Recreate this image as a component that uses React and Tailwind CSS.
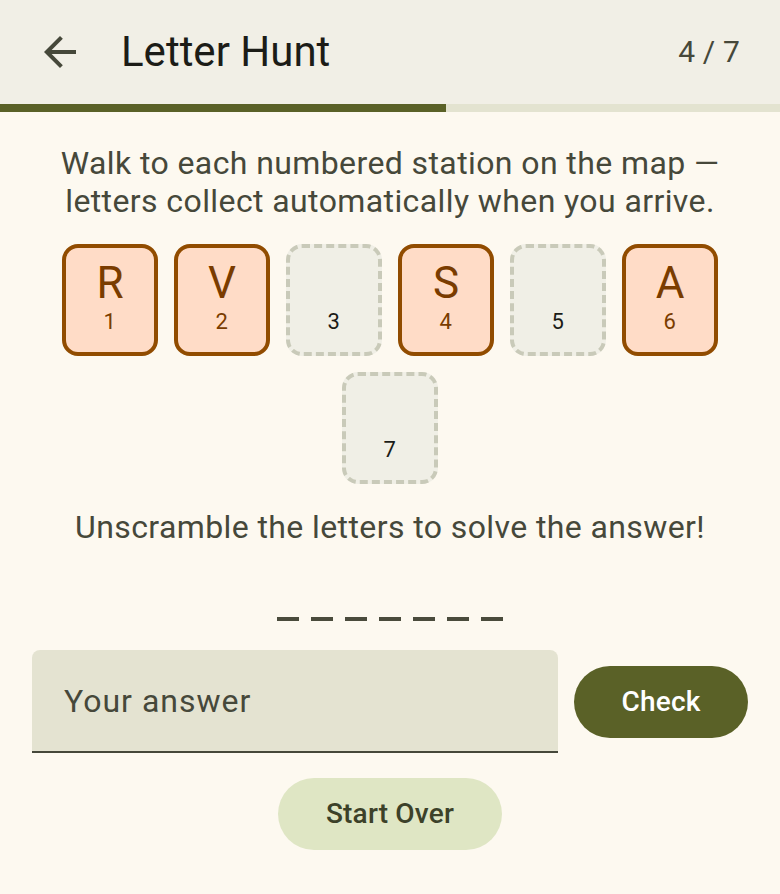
import React from 'react';

const tiles = [
  { n: 1, letter: 'R' },
  { n: 2, letter: 'V' },
  { n: 3, letter: null },
  { n: 4, letter: 'S' },
  { n: 5, letter: null },
  { n: 6, letter: 'A' },
  { n: 7, letter: null },
];

const Tile = ({ n, letter }) => {
  const found = !!letter;
  return (
    <div
      className={`w-[96px] h-[112px] rounded-[16px] border-4 flex flex-col items-center pt-[9px] ${
        found
          ? 'bg-[#ffdcc7] border-[#914c00] text-[#7a3c00]'
          : 'bg-[#f0efe6] border-dashed border-[#c9cab9] text-[#1c1c17]'
      }`}
    >
      <span className="text-[44px] leading-[52px] h-[52px]">{letter || ''}</span>
      <span className="text-[22px] leading-[26px] tracking-[0.5px]">{n}</span>
    </div>
  );
};

export default function App() {
  return (
    <div
      className="w-[780px] h-[894px] bg-[#fdf9f0] flex flex-col"
      style={{ fontFamily: 'Roboto, "Noto Sans", sans-serif' }}
    >
      {/* top bar */}
      <div className="bg-[#f1efe6] h-[104px] flex items-center">
        <div className="ml-[36px] w-[48px] h-[48px] flex items-center justify-center">
          <svg width="48" height="48" viewBox="0 0 24 24" fill="#46483a">
            <path d="M20 11H7.83l5.59-5.59L12 4l-8 8 8 8 1.41-1.41L7.83 13H20v-2z" />
          </svg>
        </div>
        <h1 className="ml-[37px] text-[42px] leading-[52px] text-[#1c1c17]">Letter Hunt</h1>
        <span className="ml-auto mr-[40px] text-[30px] leading-[40px] tracking-[0.15px] text-[#46483a]">4 / 7</span>
      </div>
      <div className="h-[8px] bg-[#e3e3d0] flex">
        <div className="h-full w-[446px] bg-[#5a6127]" />
      </div>

      <div className="flex flex-col items-center">
        <p className="mt-[32px] text-center text-[32px] leading-[38px] tracking-[0.4px] text-[#46483a]">
          Walk to each numbered station on the map —
          <br />
          letters collect automatically when you arrive.
        </p>

        <div className="mt-[24px] w-[656px] flex flex-wrap justify-center gap-[16px]">
          {tiles.map((t) => (
            <Tile key={t.n} {...t} />
          ))}
        </div>

        <p className="mt-[24px] text-center text-[32px] leading-[38px] tracking-[0.4px] text-[#46483a]">
          Unscramble the letters to solve the answer!
        </p>

        <div className="mt-[71px] flex gap-[12px]">
          {tiles.map((t) => (
            <div key={t.n} className="w-[22px] h-[4px] bg-[#4a4b3c]" />
          ))}
        </div>

        <div className="mt-[29px] w-full px-[32px] flex items-center gap-[16px]">
          <div className="w-[526px] h-[103px] bg-[#e4e3d1] rounded-t-[8px] border-b-2 border-[#46483a] flex items-center pl-[32px]">
            <span className="text-[32px] tracking-[1px] text-[#46483a]">Your answer</span>
          </div>
          <button className="h-[72px] w-[174px] rounded-full bg-[#5a6127] text-white text-[28px] font-medium tracking-[0.2px]">
            Check
          </button>
        </div>

        <button className="mt-[25px] h-[72px] w-[224px] rounded-full bg-[#dfe6c4] text-[#3c4129] text-[28px] font-medium tracking-[0.2px]">
          Start Over
        </button>
      </div>
    </div>
  );
}
